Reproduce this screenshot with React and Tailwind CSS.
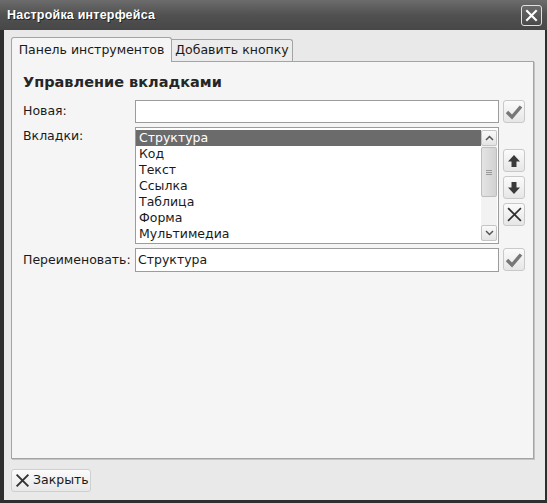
import React from 'react';

const items = ['Структура', 'Код', 'Текст', 'Ссылка', 'Таблица', 'Форма', 'Мультимедиа'];

const CheckIcon = () => (
  <svg width="20" height="20" viewBox="0 0 20 20">
    <polyline points="3,10 8,15 17,4.5" fill="none" stroke="#777" strokeWidth="3.4" strokeLinejoin="miter" />
  </svg>
);

const ArrowIcon = ({ down }) => (
  <svg width="16" height="16" viewBox="0 0 16 16" style={down ? { transform: 'rotate(180deg)' } : undefined}>
    <path d="M8 2 L14 8.5 H10.5 V14 H5.5 V8.5 H2 Z" fill="#3a3a3a" />
  </svg>
);

const CrossIcon = ({ size = 16, color = '#333', width = 1.7 }) => (
  <svg width={size} height={size} viewBox="0 0 16 16" className="shrink-0">
    <path d="M2.5 2.5 L13.5 13.5 M13.5 2.5 L2.5 13.5" stroke={color} strokeWidth={width} strokeLinecap="square" />
  </svg>
);

const SmallButton = ({ children }) => (
  <button className="w-[22px] h-[23px] flex items-center justify-center rounded-[3px] border border-[#c9c9c9] bg-gradient-to-b from-[#fbfbfb] to-[#e6e6e6]">
    {children}
  </button>
);

const Chevron = ({ down }) => (
  <svg width="9" height="6" viewBox="0 0 9 6">
    <polyline
      points={down ? '1,1 4.5,4.5 8,1' : '1,5 4.5,1.5 8,5'}
      fill="none"
      stroke="#555"
      strokeWidth="1.5"
    />
  </svg>
);

export default function App() {
  return (
    <div
      className="w-[547px] h-[503px] bg-[#2e2e2e] flex flex-col overflow-hidden text-[12.5px] text-[#1a1a1a]"
      style={{ fontFamily: '"DejaVu Sans", Verdana, sans-serif' }}
    >
      {/* Title bar */}
      <div className="h-[30px] flex items-center justify-between pl-[7px] pr-[5px] bg-gradient-to-b from-[#6c6c6c] via-[#515151] to-[#474747]">
        <span
          className="text-white font-bold text-[12.5px] tracking-[0.2px] [text-shadow:1px_1px_0_#222]"
          style={{ fontFamily: '"Liberation Sans", Arial, sans-serif' }}
        >
          Настройка интерфейса
        </span>
        <button className="w-[21px] h-[21px] flex items-center justify-center rounded-[3px] border border-[#e0e0e0] bg-gradient-to-b from-[#6a6a6a] to-[#4a4a4a]">
          <CrossIcon size={13} color="#fff" width={2.6} />
        </button>
      </div>

      {/* Body */}
      <div className="flex-1 ml-[4px] mr-[2px] mb-[3px] bg-[#e9e9e9] flex flex-col pt-[7px] pl-[7px] pr-[11px]">
        {/* Tabs */}
        <div className="flex items-end h-[24px] whitespace-nowrap">
          <div className="h-[25px] w-[161px] -mb-px relative z-10 flex items-center justify-center border border-b-0 border-[#a4a4a4] rounded-t-[3px] bg-[#f5f5f5]">
            Панель инструментов
          </div>
          <div className="h-[22px] w-[121px] flex items-center justify-center border border-l-0 border-b-0 border-[#a4a4a4] rounded-tr-[3px] bg-[#ececec]">
            Добавить кнопку
          </div>
        </div>

        {/* Panel */}
        <div className="flex-1 border border-[#a4a4a4] bg-[#f5f5f5] shadow-[1px_1px_0_#c4c4c4] pl-[11px] pt-[11px]">
          <h2 className="text-[14.5px] font-bold leading-[18px] text-[#262626]">Управление вкладками</h2>

          <div className="mt-[9px] grid grid-cols-[108px_364px_22px] gap-x-[4px] gap-y-[4px]">
            {/* Новая */}
            <div className="flex items-center h-[23px]">Новая:</div>
            <div className="h-[23px] border border-[#9c9c9c] bg-white" />
            <SmallButton>
              <CheckIcon />
            </SmallButton>

            {/* Вкладки */}
            <div className="leading-[16px] pt-[1px]">Вкладки:</div>
            <div className="h-[117px] border border-[#9c9c9c] bg-white py-[2px] pr-[1px] flex">
              <div className="flex-1 flex flex-col">
                {items.map((item, i) => (
                  <div
                    key={item}
                    className={`h-[16px] leading-[16px] pl-[3px] ${i === 0 ? 'bg-[#6b6b6b] text-white' : ''}`}
                  >
                    {item}
                  </div>
                ))}
              </div>
              <div className="w-[16px] flex flex-col bg-[#f2f2f2]">
                <div className="h-[16px] flex items-center justify-center rounded-[2px] border border-[#c4c4c4] bg-gradient-to-b from-[#fafafa] to-[#e4e4e4]">
                  <Chevron />
                </div>
                <div className="h-[50px] mt-px flex items-center justify-center rounded-[2px] border border-[#bdbdbd] bg-gradient-to-r from-[#e4e4e4] to-[#d2d2d2]">
                  <div className="flex flex-col gap-[1px]">
                    <div className="w-[6px] h-px bg-[#999]" />
                    <div className="w-[6px] h-px bg-[#999]" />
                    <div className="w-[6px] h-px bg-[#999]" />
                  </div>
                </div>
                <div className="flex-1" />
                <div className="h-[16px] flex items-center justify-center rounded-[2px] border border-[#c4c4c4] bg-gradient-to-b from-[#fafafa] to-[#e4e4e4]">
                  <Chevron down />
                </div>
              </div>
            </div>
            <div className="flex flex-col gap-[4px] pt-[22px]">
              <SmallButton>
                <ArrowIcon />
              </SmallButton>
              <SmallButton>
                <ArrowIcon down />
              </SmallButton>
              <SmallButton>
                <CrossIcon size={17} color="#2e2e2e" width={1.6} />
              </SmallButton>
            </div>

            {/* Переименовать */}
            <div className="flex items-center h-[24px]">Переименовать:</div>
            <div className="h-[24px] border border-[#9c9c9c] bg-white flex items-center pl-[2px]">
              Структура
            </div>
            <SmallButton>
              <CheckIcon />
            </SmallButton>
          </div>
        </div>

        {/* Footer */}
        <div className="h-[41px] pt-[10px]">
          <button className="h-[23px] w-[80px] flex items-center gap-[3px] pl-[3px] rounded-[3px] border border-[#cfcfcf] bg-gradient-to-b from-[#fbfbfb] to-[#e8e8e8] text-[12.5px] whitespace-nowrap">
            <CrossIcon size={15} color="#333" width={2.1} />
            Закрыть
          </button>
        </div>
      </div>
    </div>
  );
}
